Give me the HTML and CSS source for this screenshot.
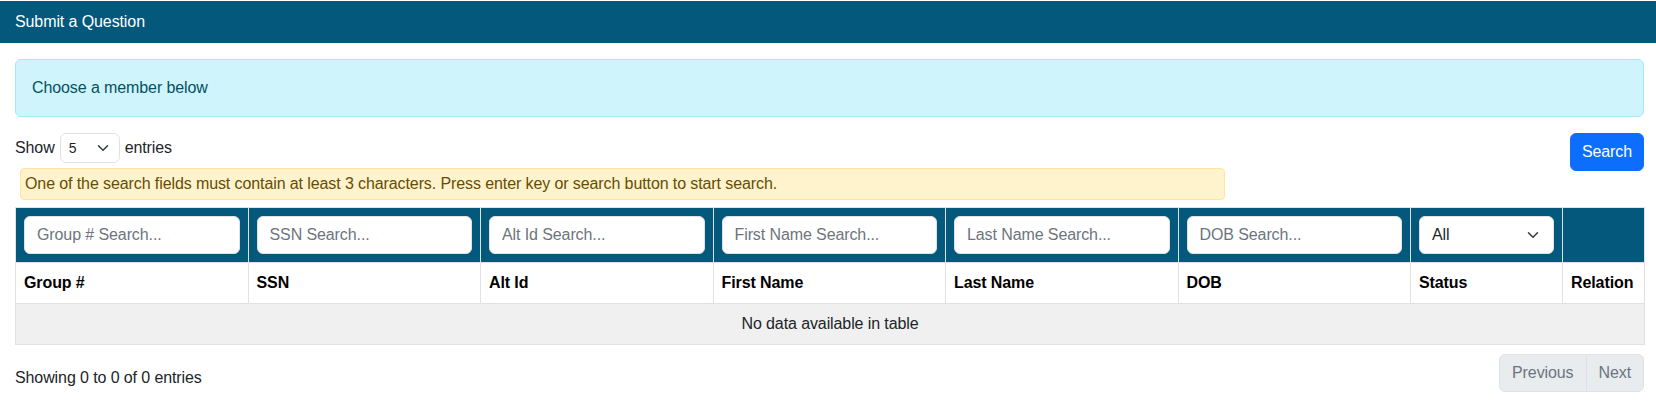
FILE: index.html
```html
<!DOCTYPE html>
<html lang="en">
<head>
<meta charset="utf-8">
<title>Submit a Question</title>
<link rel="stylesheet" href="styles.css">
</head>
<body>
<div class="card">
  <div class="card-header">Submit a Question</div>
  <div class="card-body">
    <div class="alert-info">Choose a member below</div>
    <div class="toolbar">
      <div class="toolbar-left">
        <div class="length">
          <span>Show</span>
          <div class="select select-sm">
            <span>5</span>
            <svg width="16" height="12" viewBox="0 0 16 16"><path d="m2 5 6 6 6-6" fill="none" stroke="#343a40" stroke-width="2" stroke-linecap="round" stroke-linejoin="round"/></svg>
          </div>
          <span>entries</span>
        </div>
        <div class="alert-warning">One of the search fields must contain at least 3 characters. Press enter key or search button to start search.</div>
      </div>
      <button class="btn-primary" type="button">Search</button>
    </div>
    <table class="grid">
      <colgroup>
        <col class="c-wide"><col class="c-wide"><col class="c-wide"><col class="c-wide"><col class="c-wide"><col class="c-wide"><col class="c-status"><col class="c-rel">
      </colgroup>
      <thead>
        <tr class="filters">
          <th><input class="field" placeholder="Group # Search..."></th>
          <th><input class="field" placeholder="SSN Search..."></th>
          <th><input class="field" placeholder="Alt Id Search..."></th>
          <th><input class="field" placeholder="First Name Search..."></th>
          <th><input class="field" placeholder="Last Name Search..."></th>
          <th><input class="field" placeholder="DOB Search..."></th>
          <th>
            <div class="select select-md">
              <span>All</span>
              <svg width="16" height="12" viewBox="0 0 16 16"><path d="m2 5 6 6 6-6" fill="none" stroke="#343a40" stroke-width="2" stroke-linecap="round" stroke-linejoin="round"/></svg>
            </div>
          </th>
          <th></th>
        </tr>
        <tr class="heads">
          <th>Group #</th>
          <th>SSN</th>
          <th>Alt Id</th>
          <th>First Name</th>
          <th>Last Name</th>
          <th>DOB</th>
          <th>Status</th>
          <th>Relation</th>
        </tr>
      </thead>
      <tbody>
        <tr class="empty"><td colspan="8">No data available in table</td></tr>
      </tbody>
    </table>
    <div class="footer">
      <div class="info">Showing 0 to 0 of 0 entries</div>
      <div class="pagination">
        <span class="page first">Previous</span>
        <span class="page last">Next</span>
      </div>
    </div>
  </div>
</div>
</body>
</html>
```
FILE: styles.css
```css
* { box-sizing: border-box; }
html, body { margin: 0; padding: 0; background: #fff; }
body {
  font-family: "Liberation Sans", Arial, sans-serif;
  font-size: 16px;
  line-height: 24px;
  letter-spacing: -0.1px;
  color: #212529;
  padding-top: 1px;
}
.card-header {
  background: #03587b;
  color: #fff;
  height: 42px;
  padding: 9px 15px;
  font-size: 16px;
  line-height: 24px;
}
.card-body {
  padding: 16px 12px 0 15px;
}
.alert-info {
  background: #cff4fc;
  border: 1px solid #9eeaf9;
  color: #055160;
  border-radius: 6px;
  padding: 16px;
  margin-bottom: 16px;
}
.toolbar {
  display: flex;
  justify-content: space-between;
  align-items: flex-start;
}
.toolbar-left {
  display: flex;
  flex-direction: column;
  align-items: flex-start;
}
.length {
  display: flex;
  align-items: center;
  gap: 5px;
  height: 30px;
}
.select {
  display: flex;
  align-items: center;
  justify-content: space-between;
  background: #fff;
  border: 1px solid #dee2e6;
  border-radius: 6px;
  color: #212529;
}
.select-sm {
  width: 60px;
  height: 30px;
  padding: 0 4px 0 8px;
  font-size: 14px;
}
.select-sm svg { margin-right: 4px; }
.select-md {
  width: 100%;
  height: 38px;
  padding: 0 12px 0 12px;
  font-size: 16px;
  font-weight: normal;
  text-align: left;
}
.alert-warning {
  margin: 5px 0 0 5px;
  width: 1205px;
  background: #fff3cd;
  border: 1px solid #ffe69c;
  color: #664d03;
  border-radius: 4px;
  padding: 3px 4px;
}
.btn-primary {
  background: #0d6efd;
  color: #fff;
  border: 1px solid #0d6efd;
  border-radius: 6px;
  height: 38px;
  padding: 6px 11px;
  font-family: inherit;
  font-size: 16px;
  line-height: 24px;
  letter-spacing: -0.1px;
}
.grid {
  width: 100%;
  margin-top: 7px;
  border-collapse: collapse;
  table-layout: fixed;
}
.c-wide { width: 232.5px; }
.c-status { width: 152px; }
.c-rel { width: 82px; }
.grid th, .grid td {
  border: 1px solid #dee2e6;
  padding: 8px;
  text-align: left;
  vertical-align: middle;
}
.filters th {
  background: #03587b;
}
.field {
  display: block;
  width: 100%;
  height: 38px;
  border: 1px solid #dee2e6;
  border-radius: 6px;
  padding: 6px 12px;
  font-family: inherit;
  font-size: 16px;
  letter-spacing: -0.1px;
  color: #212529;
  background: #fff;
}
.field::placeholder { color: #6c757d; }
.heads th {
  font-weight: bold;
  color: #000;
  white-space: nowrap;
}
.empty td {
  background: #f0f0f0;
  text-align: center;
}
.footer {
  display: flex;
  justify-content: space-between;
  align-items: flex-start;
  margin-top: 9px;
}
.info {
  padding-top: 12px;
}
.pagination {
  display: flex;
}
.page {
  background: #e9ecef;
  color: #6c757d;
  border: 1px solid #dee2e6;
  padding: 6px 12px;
  line-height: 24px;
}
.page.first { border-radius: 6px 0 0 6px; }
.page.last { border-radius: 0 6px 6px 0; margin-left: -1px; }
```
